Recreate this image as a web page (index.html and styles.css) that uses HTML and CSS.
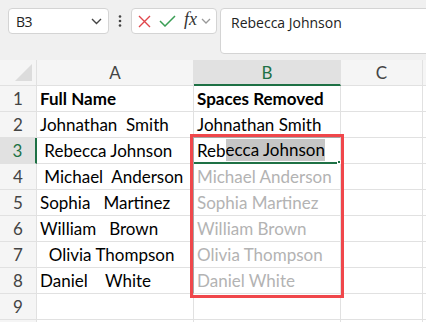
FILE: index.html
```html
<!DOCTYPE html>
<html lang="en">

<head>
    <meta charset="UTF-8">
    <meta name="viewport" content="width=device-width, initial-scale=1.0">
    <title>Spaces Removed</title>

    <link rel="stylesheet" href="styles.css">

</head>

<body>
    <div class="app">
        <!-- Formula bar -->
        <div class="formula-row">
            <div class="name-box">
                <span>B3</span>
                <svg class="chevron" width="11" height="7" viewBox="0 0 11 7">
                    <path d="M1 1 L5.5 5.5 L10 1" fill="none" stroke="#444" stroke-width="1.4" />
                </svg>
            </div>
            <div class="dots">
                <svg width="4" height="12" viewBox="0 0 4 12">
                    <circle cx="2" cy="1.5" r="1.3" fill="#444" />
                    <circle cx="2" cy="6" r="1.3" fill="#444" />
                    <circle cx="2" cy="10.5" r="1.3" fill="#444" />
                </svg>
            </div>
            <div class="fx-box">
                <svg class="icon-x" width="13" height="13" viewBox="0 0 13 13">
                    <path d="M1 1 L12 12 M12 1 L1 12" stroke="#e0464b" stroke-width="1.4" />
                </svg>
                <svg class="icon-check" width="17" height="12" viewBox="0 0 17 12">
                    <path d="M1 6 L6 11 L16 1" fill="none" stroke="#3a9e55" stroke-width="1.5" />
                </svg>
                <span class="fx">fx</span>
                <svg class="chevron" width="10" height="6" viewBox="0 0 10 6">
                    <path d="M1 1 L5 5 L9 1" fill="none" stroke="#999" stroke-width="1.3" />
                </svg>
            </div>
            <div class="formula-input">Rebecca Johnson</div>
        </div>

        <!-- Sheet grid -->
        <div class="sheet">
            <div class="corner">
                <svg width="17" height="17" viewBox="0 0 17 17">
                    <path d="M17 0 L17 17 L0 17 Z" fill="#dcdcdc" />
                </svg>
            </div>
            <div class="col-head">A</div>
            <div class="col-head active">B</div>
            <div class="col-head">C</div>
            <div class="col-head"></div>

            <div class="row-head">1</div>
            <div class="cell bold">Full Name</div>
            <div class="cell bold">Spaces Removed</div>
            <div class="cell"></div>
            <div class="cell"></div>

            <div class="row-head">2</div>
            <div class="cell">Johnathan  Smith</div>
            <div class="cell">Johnathan Smith</div>
            <div class="cell"></div>
            <div class="cell"></div>

            <div class="row-head active">3</div>
            <div class="cell"> Rebecca Johnson</div>
            <div class="cell selected">Reb<span class="sel-text">ecca Johnson</span></div>
            <div class="cell"></div>
            <div class="cell"></div>

            <div class="row-head">4</div>
            <div class="cell"> Michael  Anderson</div>
            <div class="cell ghost">Michael Anderson</div>
            <div class="cell"></div>
            <div class="cell"></div>

            <div class="row-head">5</div>
            <div class="cell">Sophia   Martinez</div>
            <div class="cell ghost">Sophia Martinez</div>
            <div class="cell"></div>
            <div class="cell"></div>

            <div class="row-head">6</div>
            <div class="cell">William   Brown</div>
            <div class="cell ghost">William Brown</div>
            <div class="cell"></div>
            <div class="cell"></div>

            <div class="row-head">7</div>
            <div class="cell">  Olivia Thompson</div>
            <div class="cell ghost">Olivia Thompson</div>
            <div class="cell"></div>
            <div class="cell"></div>

            <div class="row-head">8</div>
            <div class="cell">Daniel    White</div>
            <div class="cell ghost">Daniel White</div>
            <div class="cell"></div>
            <div class="cell"></div>

            <div class="row-head">9</div>
            <div class="cell"></div>
            <div class="cell"></div>
            <div class="cell"></div>
            <div class="cell"></div>

            <div class="row-head"></div>
            <div class="cell"></div>
            <div class="cell"></div>
            <div class="cell"></div>
            <div class="cell"></div>

            <!-- Overlays -->
            <div class="spill-range"></div>
            <div class="fill-handle"></div>
            <div class="callout"></div>
        </div>
    </div>
</body>

</html>
```

FILE: styles.css
```css
/* Page */
body {
    margin: 0;
    background-color: #f0f0f0;
    overflow: hidden;
}

.app {
    width: 426px;
    height: 322px;
    overflow: hidden;
}

/* Formula bar */
.formula-row {
    display: flex;
    align-items: flex-start;
    height: 60px;
    padding: 8px 0 0 8px;
    box-sizing: border-box;
    font-family: "Open Sans", "Noto Sans", sans-serif;
}

.formula-row > * {
    flex-shrink: 0;
}

.name-box {
    display: flex;
    align-items: center;
    justify-content: space-between;
    width: 101px;
    height: 26px;
    padding: 0 6px 0 7px;
    box-sizing: border-box;
    background-color: #fff;
    border: 1px solid #d4d4d4;
    border-radius: 4px;
    font-size: 14px;
    color: #222;
    letter-spacing: -0.6px;
}

.dots {
    display: flex;
    justify-content: center;
    align-items: center;
    width: 22px;
    height: 26px;
}

.fx-box {
    display: flex;
    align-items: center;
    width: 86px;
    height: 26px;
    padding-left: 6px;
    box-sizing: border-box;
    background-color: #fff;
    border: 1px solid #d4d4d4;
    border-radius: 4px;
}

.icon-x {
    margin-right: 8px;
}

.icon-check {
    margin-right: 8px;
}

.fx {
    font-family: "Liberation Serif", serif;
    font-style: italic;
    font-size: 18px;
    color: #333;
    margin-right: 4px;
    margin-top: -3px;
}

.formula-input {
    width: 230px;
    height: 46px;
    margin-left: 3px;
    padding: 4px 10px;
    box-sizing: border-box;
    background-color: #fff;
    border: 1px solid #d4d4d4;
    border-radius: 4px;
    font-size: 14px;
    color: #222;
}

/* Sheet */
.sheet {
    position: relative;
    display: grid;
    grid-template-columns: 37px 157px 147px 82px 1fr;
    grid-auto-rows: 26px;
    background-color: #fff;
    font-family: "Lato", sans-serif;
    font-size: 17px;
}

.sheet > div {
    box-sizing: border-box;
    border-right: 1px solid #e1e1e1;
    border-bottom: 1px solid #e1e1e1;
}

.corner {
    display: flex;
    align-items: flex-end;
    justify-content: flex-end;
    padding: 0 4px 4px 0;
    background-color: #f5f5f5;
}

.col-head,
.row-head {
    display: flex;
    align-items: center;
    justify-content: center;
    background-color: #f5f5f5;
    color: #444;
}

.col-head.active {
    background-color: #e1e1e1;
    color: #1e7145;
    border-bottom: 2px solid #1e7145;
}

.row-head.active {
    background-color: #e1e1e1;
    color: #1e7145;
    border-right: 2px solid #1e7145;
}

.cell {
    display: flex;
    align-items: center;
    padding-left: 3px;
    white-space: pre;
    color: #000;
    overflow: hidden;
}

.bold {
    font-weight: bold;
}

.ghost {
    color: #b3b3b3;
}

.cell.selected {
    border-bottom: 2px solid #1e7145;
}

.sel-text {
    background-color: #c6c6c6;
    line-height: 22px;
}

/* Overlays */
.spill-range {
    position: absolute;
    left: 193px;
    top: 77px;
    width: 148px;
    height: 157px;
    border: 1px solid #a6a6a6;
    background: none;
    pointer-events: none;
}

.fill-handle {
    position: absolute;
    left: 337px;
    top: 100px;
    width: 4px;
    height: 4px;
    background-color: #1e7145;
    border: 1px solid #fff !important;
}

.callout {
    position: absolute;
    left: 190px;
    top: 74px;
    width: 154px;
    height: 164px;
    border: 3px solid #f0474b !important;
    pointer-events: none;
}
```
